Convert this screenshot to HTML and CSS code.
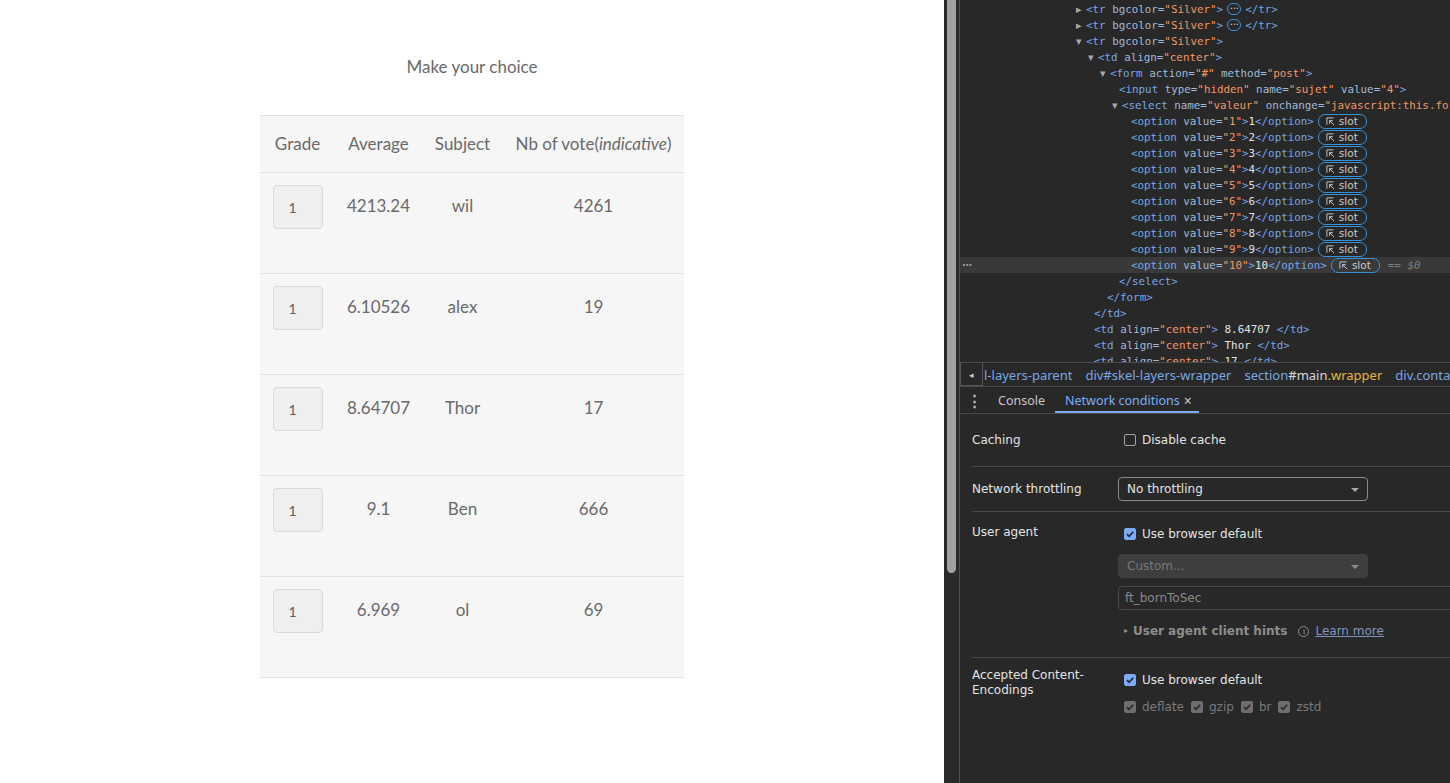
FILE: index.html
```html
<!DOCTYPE html>
<html lang="en">
<head>
<meta charset="utf-8">
<title>Make your choice</title>
<link rel="stylesheet" href="styles.css">
</head>
<body>
<div class="page">
  <div class="content">
    <p class="title">Make your choice</p>
    <table class="grades">
      <thead>
        <tr><th class="c1">Grade</th><th class="c2">Average</th><th class="c3">Subject</th><th class="c4">Nb of vote(<i>indicative</i>)</th></tr>
      </thead>
      <tbody>
        <tr><td><select class="pick"><option>1</option></select></td><td>4213.24</td><td>wil</td><td>4261</td></tr>
        <tr><td><select class="pick"><option>1</option></select></td><td>6.10526</td><td>alex</td><td>19</td></tr>
        <tr><td><select class="pick"><option>1</option></select></td><td>8.64707</td><td>Thor</td><td>17</td></tr>
        <tr><td><select class="pick"><option>1</option></select></td><td>9.1</td><td>Ben</td><td>666</td></tr>
        <tr><td><select class="pick"><option>1</option></select></td><td>6.969</td><td>ol</td><td>69</td></tr>
      </tbody>
    </table>
  </div>
</div>
<div class="gutter"><div class="thumb"></div></div>
<div class="devtools">
  <div class="elements">
    <div class="ln i0"><span class="tri">&#9656;</span><span class="t">&lt;tr </span><span class="a">bgcolor=</span><span class="v">"Silver"</span><span class="t">&gt;</span><span class="more">&#8943;</span><span class="t">&lt;/tr&gt;</span></div>
    <div class="ln i0"><span class="tri">&#9656;</span><span class="t">&lt;tr </span><span class="a">bgcolor=</span><span class="v">"Silver"</span><span class="t">&gt;</span><span class="more">&#8943;</span><span class="t">&lt;/tr&gt;</span></div>
    <div class="ln i0"><span class="tri">&#9662;</span><span class="t">&lt;tr </span><span class="a">bgcolor=</span><span class="v">"Silver"</span><span class="t">&gt;</span></div>
    <div class="ln i1"><span class="tri">&#9662;</span><span class="t">&lt;td </span><span class="a">align=</span><span class="v">"center"</span><span class="t">&gt;</span></div>
    <div class="ln i2"><span class="tri">&#9662;</span><span class="t">&lt;form </span><span class="a">action=</span><span class="v">"#"</span><span class="a"> method=</span><span class="v">"post"</span><span class="t">&gt;</span></div>
    <div class="ln i3"><span class="t">&lt;input </span><span class="a">type=</span><span class="v">"hidden"</span><span class="a"> name=</span><span class="v">"sujet"</span><span class="a"> value=</span><span class="v">"4"</span><span class="t">&gt;</span></div>
    <div class="ln i3t"><span class="tri">&#9662;</span><span class="t">&lt;select </span><span class="a">name=</span><span class="v">"valeur"</span><span class="a"> onchange=</span><span class="v">"javascript:this.form.submit()"</span><span class="t">&gt;</span></div>
    <div class="ln i4"><span class="t">&lt;option </span><span class="a">value=</span><span class="v">"1"</span><span class="t">&gt;</span><span class="x">1</span><span class="t">&lt;/option&gt;</span><span class="slot"><svg viewBox="0 0 10 10" width="9" height="9"><path d="M1 8.5V1H8.5M4 4L9 9M4 4H7.5M4 4V7.5" fill="none" stroke="currentColor" stroke-width="1.1"/></svg>slot</span></div>
    <div class="ln i4"><span class="t">&lt;option </span><span class="a">value=</span><span class="v">"2"</span><span class="t">&gt;</span><span class="x">2</span><span class="t">&lt;/option&gt;</span><span class="slot"><svg viewBox="0 0 10 10" width="9" height="9"><path d="M1 8.5V1H8.5M4 4L9 9M4 4H7.5M4 4V7.5" fill="none" stroke="currentColor" stroke-width="1.1"/></svg>slot</span></div>
    <div class="ln i4"><span class="t">&lt;option </span><span class="a">value=</span><span class="v">"3"</span><span class="t">&gt;</span><span class="x">3</span><span class="t">&lt;/option&gt;</span><span class="slot"><svg viewBox="0 0 10 10" width="9" height="9"><path d="M1 8.5V1H8.5M4 4L9 9M4 4H7.5M4 4V7.5" fill="none" stroke="currentColor" stroke-width="1.1"/></svg>slot</span></div>
    <div class="ln i4"><span class="t">&lt;option </span><span class="a">value=</span><span class="v">"4"</span><span class="t">&gt;</span><span class="x">4</span><span class="t">&lt;/option&gt;</span><span class="slot"><svg viewBox="0 0 10 10" width="9" height="9"><path d="M1 8.5V1H8.5M4 4L9 9M4 4H7.5M4 4V7.5" fill="none" stroke="currentColor" stroke-width="1.1"/></svg>slot</span></div>
    <div class="ln i4"><span class="t">&lt;option </span><span class="a">value=</span><span class="v">"5"</span><span class="t">&gt;</span><span class="x">5</span><span class="t">&lt;/option&gt;</span><span class="slot"><svg viewBox="0 0 10 10" width="9" height="9"><path d="M1 8.5V1H8.5M4 4L9 9M4 4H7.5M4 4V7.5" fill="none" stroke="currentColor" stroke-width="1.1"/></svg>slot</span></div>
    <div class="ln i4"><span class="t">&lt;option </span><span class="a">value=</span><span class="v">"6"</span><span class="t">&gt;</span><span class="x">6</span><span class="t">&lt;/option&gt;</span><span class="slot"><svg viewBox="0 0 10 10" width="9" height="9"><path d="M1 8.5V1H8.5M4 4L9 9M4 4H7.5M4 4V7.5" fill="none" stroke="currentColor" stroke-width="1.1"/></svg>slot</span></div>
    <div class="ln i4"><span class="t">&lt;option </span><span class="a">value=</span><span class="v">"7"</span><span class="t">&gt;</span><span class="x">7</span><span class="t">&lt;/option&gt;</span><span class="slot"><svg viewBox="0 0 10 10" width="9" height="9"><path d="M1 8.5V1H8.5M4 4L9 9M4 4H7.5M4 4V7.5" fill="none" stroke="currentColor" stroke-width="1.1"/></svg>slot</span></div>
    <div class="ln i4"><span class="t">&lt;option </span><span class="a">value=</span><span class="v">"8"</span><span class="t">&gt;</span><span class="x">8</span><span class="t">&lt;/option&gt;</span><span class="slot"><svg viewBox="0 0 10 10" width="9" height="9"><path d="M1 8.5V1H8.5M4 4L9 9M4 4H7.5M4 4V7.5" fill="none" stroke="currentColor" stroke-width="1.1"/></svg>slot</span></div>
    <div class="ln i4"><span class="t">&lt;option </span><span class="a">value=</span><span class="v">"9"</span><span class="t">&gt;</span><span class="x">9</span><span class="t">&lt;/option&gt;</span><span class="slot"><svg viewBox="0 0 10 10" width="9" height="9"><path d="M1 8.5V1H8.5M4 4L9 9M4 4H7.5M4 4V7.5" fill="none" stroke="currentColor" stroke-width="1.1"/></svg>slot</span></div>
    <div class="ln cur"><span class="gut">&#183;&#183;&#183;</span><span class="t">&lt;option </span><span class="a">value=</span><span class="v">"10"</span><span class="t">&gt;</span><span class="x">10</span><span class="t">&lt;/option&gt;</span><span class="slot"><svg viewBox="0 0 10 10" width="9" height="9"><path d="M1 8.5V1H8.5M4 4L9 9M4 4H7.5M4 4V7.5" fill="none" stroke="currentColor" stroke-width="1.1"/></svg>slot</span><span class="eq">== $0</span></div>
    <div class="ln i3"><span class="t">&lt;/select&gt;</span></div>
    <div class="ln i2c"><span class="t">&lt;/form&gt;</span></div>
    <div class="ln i1c"><span class="t">&lt;/td&gt;</span></div>
    <div class="ln i1c"><span class="t">&lt;td </span><span class="a">align=</span><span class="v">"center"</span><span class="t">&gt;</span><span class="x"> 8.64707 </span><span class="t">&lt;/td&gt;</span></div>
    <div class="ln i1c"><span class="t">&lt;td </span><span class="a">align=</span><span class="v">"center"</span><span class="t">&gt;</span><span class="x"> Thor </span><span class="t">&lt;/td&gt;</span></div>
    <div class="ln i1c"><span class="t">&lt;td </span><span class="a">align=</span><span class="v">"center"</span><span class="t">&gt;</span><span class="x"> 17 </span><span class="t">&lt;/td&gt;</span></div>
  </div>
  <div class="crumbs">
    <span class="back">&#9666;</span>
    <span class="crumb">l-layers-parent</span>
    <span class="crumb">div#skel-layers-wrapper</span>
    <span class="crumb">section<span class="cid">#main</span><span class="ccl">.wrapper</span></span>
    <span class="crumb">div.container</span>
  </div>
  <div class="tabs">
    <span class="kebab">&#8942;</span>
    <span class="tab">Console</span>
    <span class="tab active">Network conditions<span class="close">&#215;</span></span>
  </div>
  <div class="settings">
    <div class="row r-cache">
      <div class="lbl">Caching</div>
      <div class="ctl"><span class="cb"><span class="box"></span>Disable cache</span></div>
    </div>
    <div class="row r-thr">
      <div class="lbl">Network throttling</div>
      <div class="ctl"><div class="dd">No throttling<span class="arrow"></span></div></div>
    </div>
    <div class="row r-ua">
      <div class="lbl">User agent</div>
      <div class="ctl">
        <span class="cb"><span class="box on"><svg viewBox="0 0 12 12" width="12" height="12"><path d="M3 6.2L5.1 8.3L9.2 3.8" fill="none" stroke="#1e2a3a" stroke-width="1.7"/></svg></span>Use browser default</span>
        <div class="dd dis">Custom...<span class="arrow"></span></div>
        <div class="inp">ft_bornToSec</div>
        <div class="hints"><span class="htri">&#9656;</span><b>User agent client hints</b><span class="info">i</span><span class="learn">Learn more</span></div>
      </div>
    </div>
    <div class="row r-enc">
      <div class="lbl">Accepted Content-<br>Encodings</div>
      <div class="ctl">
        <span class="cb"><span class="box on"><svg viewBox="0 0 12 12" width="12" height="12"><path d="M3 6.2L5.1 8.3L9.2 3.8" fill="none" stroke="#1e2a3a" stroke-width="1.7"/></svg></span>Use browser default</span>
        <div class="encs">
          <span class="cb off"><span class="box gray"><svg viewBox="0 0 12 12" width="12" height="12"><path d="M3 6.2L5.1 8.3L9.2 3.8" fill="none" stroke="#2a2a2a" stroke-width="1.7"/></svg></span>deflate</span>
          <span class="cb off"><span class="box gray"><svg viewBox="0 0 12 12" width="12" height="12"><path d="M3 6.2L5.1 8.3L9.2 3.8" fill="none" stroke="#2a2a2a" stroke-width="1.7"/></svg></span>gzip</span>
          <span class="cb off"><span class="box gray"><svg viewBox="0 0 12 12" width="12" height="12"><path d="M3 6.2L5.1 8.3L9.2 3.8" fill="none" stroke="#2a2a2a" stroke-width="1.7"/></svg></span>br</span>
          <span class="cb off"><span class="box gray"><svg viewBox="0 0 12 12" width="12" height="12"><path d="M3 6.2L5.1 8.3L9.2 3.8" fill="none" stroke="#2a2a2a" stroke-width="1.7"/></svg></span>zstd</span>
        </div>
      </div>
    </div>
  </div>
</div>
</body>
</html>
```

FILE: styles.css
```css
html, body {
  margin: 0;
  padding: 0;
}
body {
  display: flex;
  width: 1450px;
  height: 783px;
  overflow: hidden;
  background: #282828;
}

/* ---------- page ---------- */
.page {
  width: 944px;
  flex: none;
  background: #fff;
  font-family: Lato, "Open Sans", sans-serif;
  color: #6a6a6a;
}
.content {
  width: 424px;
  margin-left: 260px;
  padding-top: 55px;
}
.title {
  margin: 0;
  height: 60px;
  font-size: 17px;
  line-height: 24px;
  text-align: center;
}
.grades {
  width: 424px;
  table-layout: fixed;
  border-collapse: separate;
  border-spacing: 0;
  background: #f6f6f6;
  font-size: 17px;
}
.grades .c1 { width: 75px; }
.grades .c2 { width: 87px; }
.grades .c3 { width: 81px; }
.grades .c4 { width: 181px; }
.grades th {
  font-weight: normal;
  padding: 0;
  line-height: 56px;
  text-align: center;
  border-top: 1px solid #e1e1e1;
  border-bottom: 1px solid #e1e1e1;
  white-space: nowrap;
}
.grades td {
  height: 101px;
  box-sizing: border-box;
  padding: 12px 0 0;
  line-height: 42px;
  text-align: center;
  vertical-align: top;
  border-bottom: 1px solid #e1e1e1;
}
.pick {
  -webkit-appearance: none;
  appearance: none;
  display: block;
  margin: 0 auto;
  width: 50px;
  height: 44px;
  box-sizing: border-box;
  padding: 0 0 0 15px;
  border: 1px solid #dadada;
  border-radius: 4px;
  background: #efefef;
  font-family: Lato, sans-serif;
  font-size: 14px;
  color: #5f5f5f;
}

/* ---------- scrollbar gutter ---------- */
.gutter {
  width: 15px;
  flex: none;
  background: #2a2a2a;
}
.thumb {
  margin-left: 3px;
  width: 9px;
  height: 573px;
  background: #a2a2a2;
  border-radius: 0 0 5px 5px;
}

/* ---------- devtools ---------- */
.devtools {
  flex: 1;
  min-width: 0;
  display: flex;
  flex-direction: column;
  border-left: 1px solid #4e4e4e;
  background: #282828;
  overflow: hidden;
}
.elements {
  height: 362px;
  flex: none;
  box-sizing: border-box;
  padding-top: 1px;
  overflow: hidden;
  font-family: "DejaVu Sans Mono", monospace;
  font-size: 10.85px;
}
.ln {
  height: 16px;
  line-height: 17px;
  white-space: pre;
  overflow: hidden;
}
.ln.i0 { padding-left: 116px; }
.ln.i1 { padding-left: 128px; }
.ln.i2 { padding-left: 140px; }
.ln.i3 { padding-left: 159px; }
.ln.i3t { padding-left: 152px; }
.ln.i4 { padding-left: 171px; }
.ln.i2c { padding-left: 147px; }
.ln.i1c { padding-left: 134px; }
.ln.cur { background: #393939; }
.gut {
  display: inline-block;
  width: 171px;
  box-sizing: border-box;
  padding-left: 2px;
  color: #9a9a9a;
  font-family: "DejaVu Sans", sans-serif;
  font-weight: bold;
  font-size: 10px;
  letter-spacing: -0.5px;
}
.tri {
  display: inline-block;
  width: 10px;
  color: #a6a6a6;
  font-family: "DejaVu Sans", sans-serif;
  font-size: 11px;
}
.t { color: #78a6e6; }
.a { color: #a1b8d8; }
.v { color: #f29766; }
.x { color: #e3e3e3; }
.more {
  display: inline-block;
  vertical-align: middle;
  margin: -2px 4px 0 4px;
  width: 12px;
  height: 10px;
  line-height: 8px;
  border: 1px solid #3c94d8;
  border-radius: 6px;
  text-align: center;
  color: #e3e3e3;
  font-family: "DejaVu Sans", sans-serif;
  font-size: 9px;
}
.slot {
  display: inline-flex;
  align-items: center;
  gap: 4px;
  vertical-align: middle;
  margin: -2px 0 0 4px;
  height: 13px;
  padding: 0 8px 0 7px;
  border: 1px solid #3690d6;
  border-radius: 7px;
  color: #c8c8c8;
  font-family: "DejaVu Sans", sans-serif;
  font-size: 10.5px;
  line-height: 13px;
}
.slot svg { color: #b9c4d4; }
.eq {
  margin-left: 8px;
  color: #7e7e7e;
  font-style: italic;
}

/* breadcrumbs */
.crumbs {
  flex: none;
  height: 23px;
  border-top: 1px solid #4a4a4a;
  display: flex;
  align-items: center;
  white-space: nowrap;
  font-family: "Noto Sans", sans-serif;
  font-size: 13px;
  color: #7aa6e2;
  gap: 13px;
}
.back {
  flex: none;
  width: 23px;
  height: 23px;
  box-sizing: border-box;
  border: 1px solid #555;
  border-top: none;
  display: flex;
  align-items: center;
  justify-content: center;
  color: #c8c8c8;
  font-size: 9px;
  margin-right: -12px;
}
.cid { color: #d8d8d8; }
.ccl { color: #e2b53b; }

/* tabs */
.tabs {
  flex: none;
  height: 26px;
  border-top: 1px solid #4a4a4a;
  border-bottom: 1px solid #4a4a4a;
  display: flex;
  align-items: stretch;
  font-family: "Noto Sans", sans-serif;
  font-size: 12.5px;
  color: #c7c7c7;
}
.kebab {
  width: 28px;
  display: flex;
  align-items: center;
  justify-content: center;
  color: #bdbdbd;
  font-size: 15px;
  font-weight: bold;
}
.tab {
  display: flex;
  align-items: center;
  padding: 3px 10px 0;
  box-sizing: border-box;
  border-bottom: 2px solid transparent;
}
.tab.active {
  color: #7cacf8;
  border-bottom-color: #7cacf8;
  padding-right: 7px;
}
.close {
  margin-left: 4px;
  color: #c7c7c7;
  font-size: 14px;
}

/* settings */
.settings {
  flex: 1;
  margin-left: 12px;
  font-family: "DejaVu Sans", sans-serif;
  font-size: 12px;
  color: #e3e3e3;
}
.row {
  display: grid;
  grid-template-columns: 146px 1fr;
  border-bottom: 1px solid #474747;
  line-height: 18px;
}
.r-cache { padding: 17px 0 17px; }
.r-thr { padding: 10px 0; }
.r-thr .lbl { align-self: center; }
.r-ua .lbl { padding-top: 11px; }
.r-ua .ctl { padding: 13px 0 17px; }
.r-enc { border-bottom: none; }
.r-enc .lbl { padding-top: 10px; line-height: 15px; }
.r-enc .ctl { padding-top: 13px; }
.cb {
  display: flex;
  align-items: center;
  gap: 6px;
  padding-left: 6px;
  height: 18px;
}
.box {
  width: 12px;
  height: 12px;
  box-sizing: border-box;
  border: 1px solid #a0a0a0;
  border-radius: 2px;
  display: block;
  flex: none;
}
.box svg { display: block; margin: -1px; }
.box.on { background: #7cacf8; border-color: #7cacf8; }
.box.gray { background: #6e6e6e; border-color: #6e6e6e; }
.dd {
  position: relative;
  width: 250px;
  height: 24px;
  box-sizing: border-box;
  border: 1px solid #8a8a8a;
  border-radius: 4px;
  padding-left: 8px;
  line-height: 22px;
  color: #e3e3e3;
}
.arrow {
  position: absolute;
  right: 8px;
  top: 10px;
  border-left: 4px solid transparent;
  border-right: 4px solid transparent;
  border-top: 4px solid #a8a8a8;
}
.dd.dis {
  margin-top: 11px;
  border-color: #3e3e3e;
  background: #3e3e3e;
  color: #787878;
}
.dd.dis .arrow { border-top-color: #8a8a8a; }
.inp {
  margin-top: 8px;
  width: 360px;
  height: 24px;
  box-sizing: border-box;
  border: 1px solid #4b4b4b;
  border-radius: 4px;
  padding-left: 6px;
  line-height: 22px;
  color: #8a8a8a;
}
.hints {
  margin-top: 12px;
  padding-left: 6px;
  height: 18px;
  display: flex;
  align-items: center;
  color: #8d8d8d;
  white-space: nowrap;
}
.htri {
  font-size: 8px;
  width: 9px;
}
.hints b { font-weight: bold; }
.info {
  margin-left: 11px;
  width: 11px;
  height: 11px;
  box-sizing: border-box;
  border: 1px solid #8d8d8d;
  border-radius: 50%;
  font-size: 8px;
  line-height: 9px;
  text-align: center;
  font-family: "DejaVu Serif", serif;
}
.learn {
  margin-left: 6px;
  color: #8193bb;
  text-decoration: underline;
}
.encs {
  margin-top: 9px;
  display: flex;
  gap: 1px;
  color: #7a7a7a;
}
```
